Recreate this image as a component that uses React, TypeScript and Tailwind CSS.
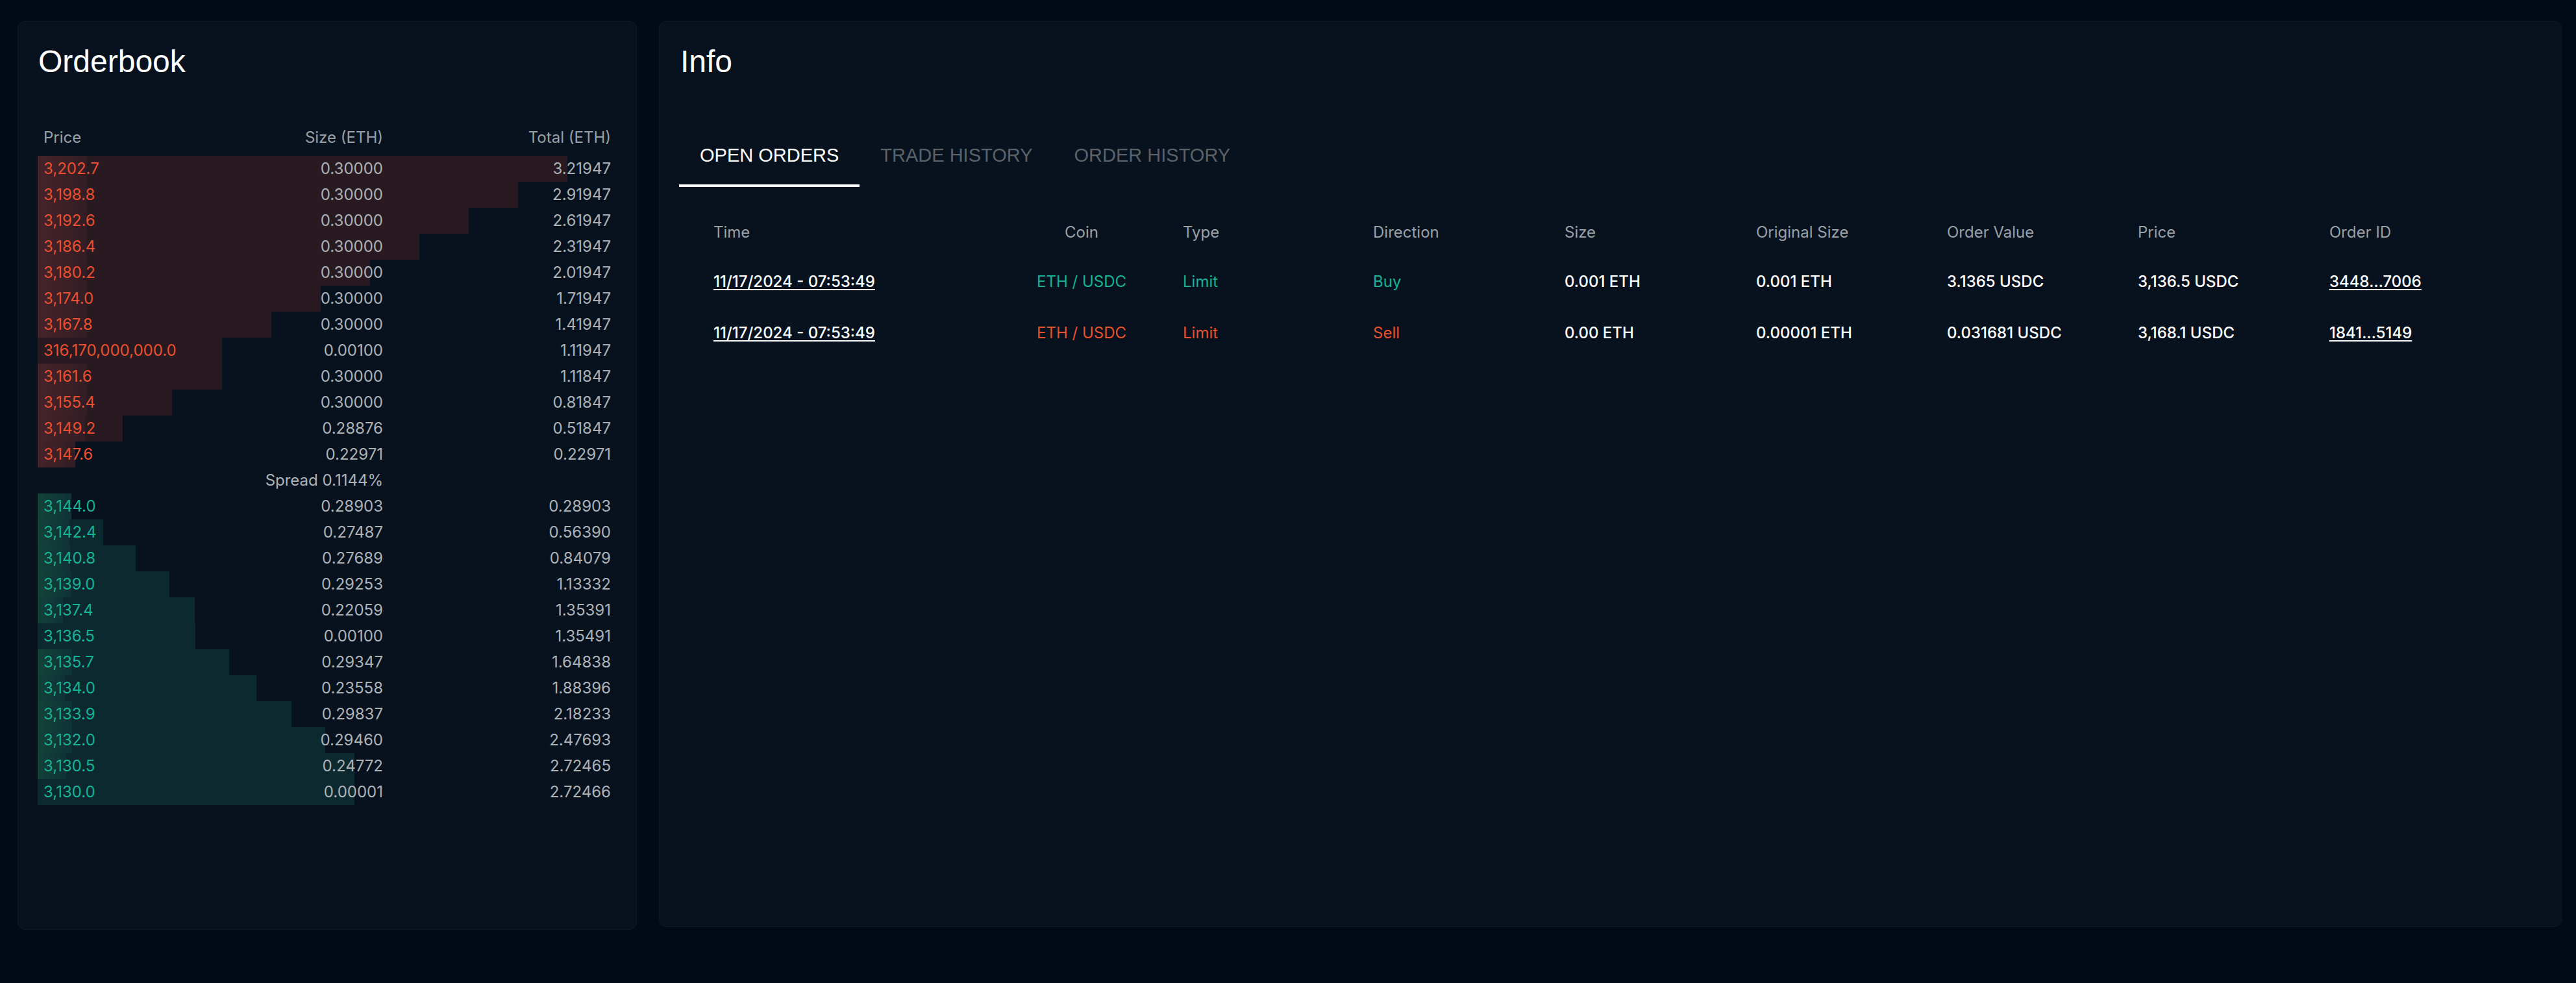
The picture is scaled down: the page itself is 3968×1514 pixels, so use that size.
import React from 'react';

type BookRow = { price: string; size: number; total: number };

const asks: BookRow[] = [
    { price: '3,202.7', size: 0.3, total: 3.21947 },
    { price: '3,198.8', size: 0.3, total: 2.91947 },
    { price: '3,192.6', size: 0.3, total: 2.61947 },
    { price: '3,186.4', size: 0.3, total: 2.31947 },
    { price: '3,180.2', size: 0.3, total: 2.01947 },
    { price: '3,174.0', size: 0.3, total: 1.71947 },
    { price: '3,167.8', size: 0.3, total: 1.41947 },
    { price: '316,170,000,000.0', size: 0.001, total: 1.11947 },
    { price: '3,161.6', size: 0.3, total: 1.11847 },
    { price: '3,155.4', size: 0.3, total: 0.81847 },
    { price: '3,149.2', size: 0.28876, total: 0.51847 },
    { price: '3,147.6', size: 0.22971, total: 0.22971 },
];

const bids: BookRow[] = [
    { price: '3,144.0', size: 0.28903, total: 0.28903 },
    { price: '3,142.4', size: 0.27487, total: 0.5639 },
    { price: '3,140.8', size: 0.27689, total: 0.84079 },
    { price: '3,139.0', size: 0.29253, total: 1.13332 },
    { price: '3,137.4', size: 0.22059, total: 1.35391 },
    { price: '3,136.5', size: 0.001, total: 1.35491 },
    { price: '3,135.7', size: 0.29347, total: 1.64838 },
    { price: '3,134.0', size: 0.23558, total: 1.88396 },
    { price: '3,133.9', size: 0.29837, total: 2.18233 },
    { price: '3,132.0', size: 0.2946, total: 2.47693 },
    { price: '3,130.5', size: 0.24772, total: 2.72465 },
    { price: '3,130.0', size: 0.00001, total: 2.72466 },
];

// px per ETH used for the depth bars on each side
const ASK_SCALE = 253.5;
const BID_SCALE = 179;

type Order = {
    time: string;
    side: 'buy' | 'sell';
    size: string;
    originalSize: string;
    value: string;
    price: string;
    id: string;
};

const orders: Order[] = [
    { time: '11/17/2024 - 07:53:49', side: 'buy', size: '0.001 ETH', originalSize: '0.001 ETH', value: '3.1365 USDC', price: '3,136.5 USDC', id: '3448...7006' },
    { time: '11/17/2024 - 07:53:49', side: 'sell', size: '0.00 ETH', originalSize: '0.00001 ETH', value: '0.031681 USDC', price: '3,168.1 USDC', id: '1841...5149' },
];

const numFont = "font-['Inter',sans-serif]";
const titleFont = "font-['Liberation_Sans',Arial,sans-serif]";
const cols = 'grid grid-cols-[411px_312px_293px_295px_295px_294px_294px_295px_1fr] items-center';

const BookLine = ({ row, side }: { row: BookRow; side: 'ask' | 'bid' }) => {
    const scale = side === 'ask' ? ASK_SCALE : BID_SCALE;
    const isAsk = side === 'ask';
    return (
        <div className="relative h-10">
            <div
                className={`absolute left-0 top-0 bottom-0 ${isAsk ? 'bg-[#291a21]' : 'bg-[#0d2930]'}`}
                style={{ width: row.total * scale }}
            />
            <div
                className={`absolute left-0 top-0 bottom-0 bg-linear-to-r ${isAsk ? 'from-[#46232a] to-[#331d24]' : 'from-[#134239] to-[#0f3236]'}`}
                style={{ width: row.size * scale }}
            />
            <div className="relative grid grid-cols-[1fr_260px_351px] items-center h-10 px-[9px] text-[24px]">
                <span className={isAsk ? 'text-[#e9502f]' : 'text-[#17b395]'}>{row.price}</span>
                <span className="text-right text-[#adb2b7]">{row.size.toFixed(5)}</span>
                <span className="text-right text-[#adb2b7]">{row.total.toFixed(5)}</span>
            </div>
        </div>
    );
};

const Orderbook = () => (
    <div className="w-[954px] h-[1400px] shrink-0 rounded-[12px] bg-[#08121e] border border-white/[0.03] pt-[38px]">
        <h1 className={`${titleFont} text-[48px] leading-[48px] text-white pl-[31px]`}>Orderbook</h1>
        <div className={`${numFont} px-[30px] mt-[73px]`}>
            <div className="grid grid-cols-[1fr_260px_351px] items-center h-10 px-[9px] text-[24px] text-[#9aa0a6] mb-2">
                <span>Price</span>
                <span className="text-right">Size (ETH)</span>
                <span className="text-right">Total (ETH)</span>
            </div>
            {asks.map(row => (
                <BookLine key={row.price} row={row} side="ask" />
            ))}
            <div className="grid grid-cols-[1fr_260px_351px] items-center h-10 px-[9px] text-[24px] text-[#adb2b7]">
                <span />
                <span className="text-right whitespace-nowrap">Spread 0.1144%</span>
                <span />
            </div>
            {bids.map(row => (
                <BookLine key={row.price} row={row} side="bid" />
            ))}
        </div>
    </div>
);

const tabs = ['OPEN ORDERS', 'TRADE HISTORY', 'ORDER HISTORY'];

const InfoPanel = () => (
    <div className="flex-1 h-[1396px] rounded-[12px] bg-[#08121e] border border-white/[0.03] pt-[38px] px-[32px]">
        <h1 className={`${titleFont} text-[48px] leading-[48px] text-white`}>Info</h1>
        <div className={`${titleFont} flex mt-[77px] -ml-[2px]`}>
            {tabs.map((tab, i) => (
                <div
                    key={tab}
                    className={`px-8 pt-[27px] pb-[28px] text-[29px] leading-[33px] border-b-4 ${i === 0 ? 'text-white border-white' : 'text-[#5b6168] border-transparent'}`}
                >
                    {tab}
                </div>
            ))}
        </div>
        <div className={`${numFont} text-[24px] mt-[34px] pl-[51px]`}>
            <div className={`${cols} h-[72px] text-[#9aa0a6]`}>
                <span>Time</span>
                <span className="text-center">Coin</span>
                <span>Type</span>
                <span>Direction</span>
                <span>Size</span>
                <span>Original Size</span>
                <span>Order Value</span>
                <span>Price</span>
                <span>Order ID</span>
            </div>
            {orders.map(order => {
                const tone = order.side === 'buy' ? 'text-[#17b395]' : 'text-[#e9502f]';
                return (
                    <div key={order.id} className={`${cols} h-[79px] font-medium text-white`}>
                        <span className="underline underline-offset-[3px]">{order.time}</span>
                        <span className={`text-center font-normal ${tone}`}>ETH / USDC</span>
                        <span className={`font-normal ${tone}`}>Limit</span>
                        <span className={`font-normal ${tone}`}>{order.side === 'buy' ? 'Buy' : 'Sell'}</span>
                        <span>{order.size}</span>
                        <span>{order.originalSize}</span>
                        <span>{order.value}</span>
                        <span>{order.price}</span>
                        <span className="underline underline-offset-[3px]">{order.id}</span>
                    </div>
                );
            })}
        </div>
    </div>
);

export default function App() {
    return (
        <div className="flex gap-[34px] h-[1514px] w-full bg-[#020a16] pl-[27px] pr-[22px] pt-[32px]">
            <Orderbook />
            <InfoPanel />
        </div>
    );
}
